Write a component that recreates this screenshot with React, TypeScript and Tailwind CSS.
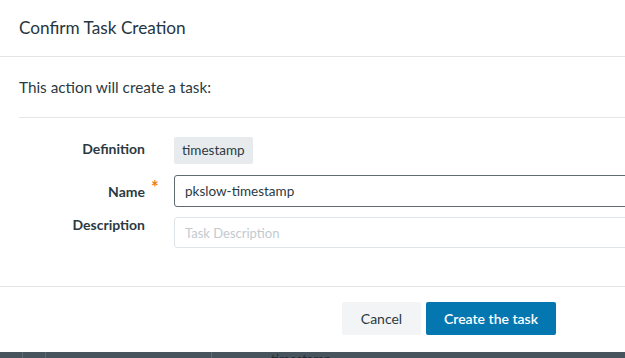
import React from 'react'

const FONT = { fontFamily: 'Lato, "Open Sans", "Liberation Sans", sans-serif' }

export default function App() {
  return (
    <div className="w-[625px] h-[358px] overflow-hidden bg-white flex flex-col" style={FONT}>
      <div className="h-[352px] flex flex-col">
        <header className="h-[57px] px-[19px] flex items-center border-b border-[#e2e4e6]">
          <h3 className="text-[17.2px] text-[#263641] -mt-[1px]">Confirm Task Creation</h3>
        </header>

        <div className="pl-[19px]">
          <p className="h-[61px] flex items-center border-b border-[#e2e6e9] text-[15.3px] text-[#2b3a42]">
            This action will create a task:
          </p>
        </div>

        <div className="pt-[19px] flex flex-col">
          <div className="flex items-center h-[27px]">
            <label className="w-[145px] text-right text-[14px] font-bold text-[#2b3a42] -mt-[4px]">Definition</label>
            <span className="ml-[29px] h-[27px] px-[8px] flex items-center rounded-[2px] bg-[#e8ebee] text-[13.5px] text-[#2b3a42]">
              timestamp
            </span>
          </div>

          <div className="flex items-center mt-[11px] h-[32px]">
            <label className="w-[145px] text-right text-[14px] font-bold text-[#2b3a42] relative">
              Name
              <span className="absolute left-full ml-[6px] -top-[7px] text-[#f07c22] text-[18px] font-bold">*</span>
            </label>
            <input
              readOnly
              value="pkslow-timestamp"
              className="ml-[29px] flex-1 h-[32px] -mr-[4px] px-[10px] rounded-[3px] border border-[#5f6b73] text-[13.5px] text-[#2b3a42] outline-none"
              style={FONT}
            />
          </div>

          <div className="flex items-start mt-[10px] h-[31px]">
            <label className="w-[145px] text-right text-[14px] font-bold text-[#2b3a42] -mt-[3px]">Description</label>
            <input
              readOnly
              placeholder="Task Description"
              className="ml-[29px] flex-1 h-[31px] -mr-[4px] px-[10px] rounded-[3px] border border-[#dfe4e8] text-[13px] text-[#2b3a42] placeholder:text-[#c2cacf] outline-none"
              style={FONT}
            />
          </div>
        </div>

        <div className="mt-[38px] border-t border-[#e2e4e6] flex pl-[342px] pt-[15px] gap-[5px]">
          <button className="w-[79px] h-[33px] rounded-[2px] bg-[#f2f4f6] text-[14px] text-[#2b3a42]">Cancel</button>
          <button className="w-[130px] h-[33px] rounded-[2px] bg-[#0477b1] text-[14px] font-semibold text-white">Create the task</button>
        </div>
      </div>

      <div className="h-[6px] bg-[#47545e] flex overflow-hidden">
        <div className="w-[23px] border-r border-[#5d6a73]" />
        <div className="w-[23px] border-r border-[#5d6a73]" />
        <div className="w-[166px] border-r border-[#5d6a73]" />
        <div className="pl-[59px] mt-[1px] text-[13px] text-[#1f2a31] leading-none">timestamp</div>
      </div>
    </div>
  )
}
